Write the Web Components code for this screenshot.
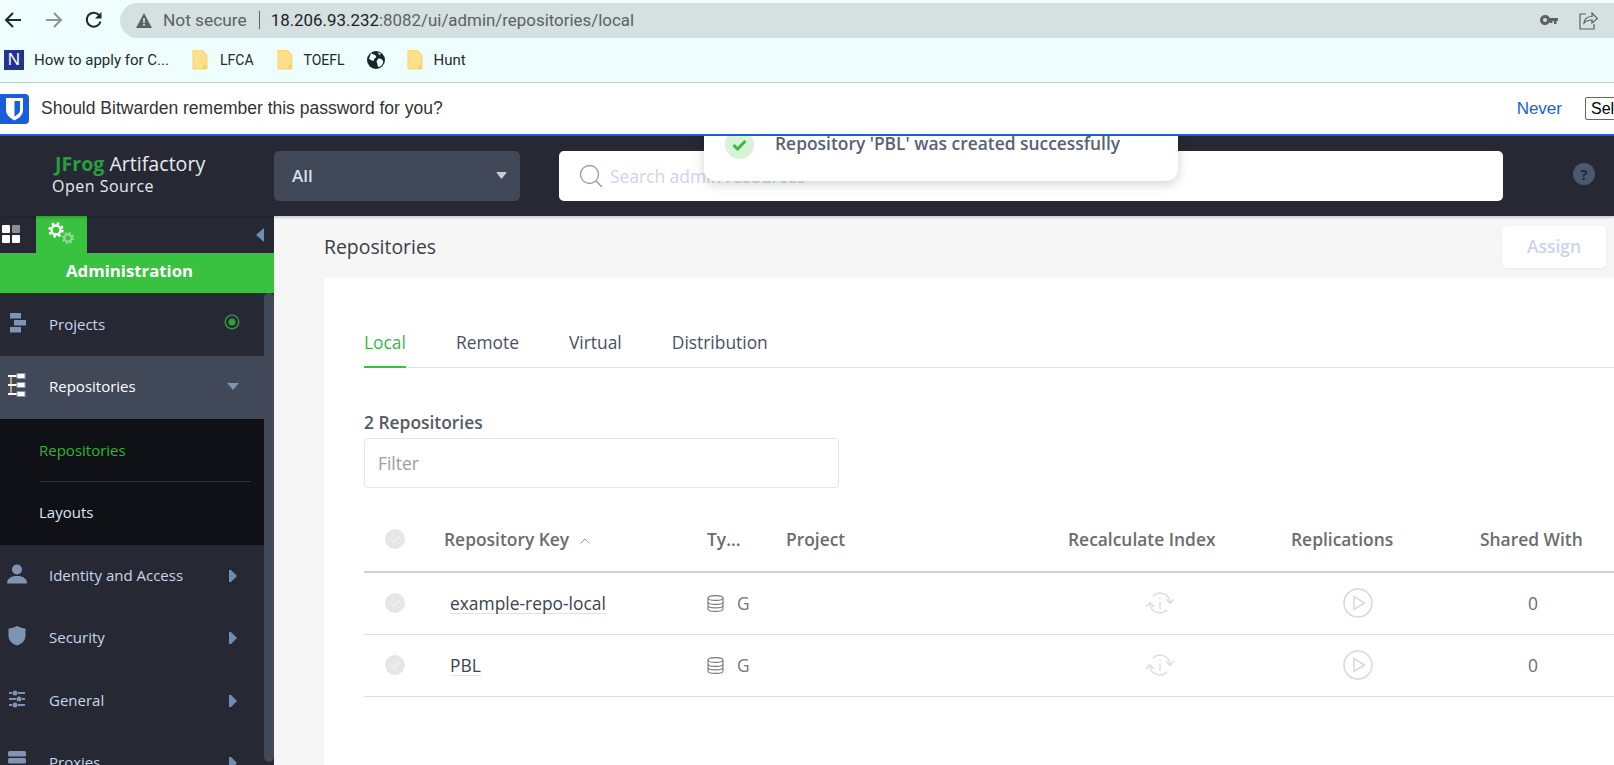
<!DOCTYPE html>
<html>
<head>
<meta charset="utf-8">
<title>Repositories</title>
<style>
    html, body { margin: 0; height: 765px; overflow: hidden; background: #fff; }
    body { display: flex; flex-direction: column; font-family: "Open Sans", sans-serif; }
</style>
</head>
<body>
<browser-toolbar url-host="18.206.93.232" url-path=":8082/ui/admin/repositories/local"></browser-toolbar>
<bookmark-bar></bookmark-bar>
<bitwarden-bar></bitwarden-bar>
<artifactory-app>
    <success-toast text="Repository 'PBL' was created successfully"></success-toast>
    <app-header></app-header>
    <div style="display:flex;flex:1;min-height:0">
        <side-nav>
            <nav-item label="Projects" arrow="dot" style="height:63px">
                <svg slot="icon" width="20" height="20" viewBox="0 0 20 20" fill="#7f93b2"><rect x="3" y="0" width="11" height="5.5"/><rect x="7" y="7" width="12" height="5.5"/><rect x="3" y="14" width="11" height="5.5"/></svg>
            </nav-item>
            <nav-item label="Repositories" arrow="down" open>
                <svg slot="icon" width="20" height="24" viewBox="0 0 20 24" fill="none"><path d="M4 3v18" stroke="#eebb80" stroke-width="1.500"/><path d="M1 3h9M1 12h9M1 21h9" stroke="#fff" stroke-width="2"/><rect x="10" y="0.5" width="8" height="5" fill="#fff" stroke="#8a94a8"/><rect x="10" y="9.5" width="8" height="5" fill="#fff" stroke="#8a94a8"/><rect x="10" y="18.5" width="8" height="5" fill="#fff" stroke="#8a94a8"/></svg>
            </nav-item>
            <sub-menu>
                <sub-item label="Repositories" active></sub-item>
                <sub-item label="Layouts"></sub-item>
            </sub-menu>
            <nav-item label="Identity and Access" arrow="right">
                <svg slot="icon" width="20" height="20" viewBox="0 0 20 20" fill="#7f93b2"><circle cx="10" cy="5.5" r="5"/><path d="M0 19.500c0-5 4-7.500 10-7.500s10 2.500 10 7.500z"/></svg>
            </nav-item>
            <nav-item label="Security" arrow="right">
                <svg slot="icon" width="20" height="20" viewBox="0 0 20 20" fill="#7f93b2"><path d="M10 0c3 1.800 5.500 2.300 8.500 2.500v7c0 5-3.500 8.500-8.500 10-5-1.500-8.500-5-8.500-10v-7C4.500 2.300 7 1.800 10 0z"/></svg>
            </nav-item>
            <nav-item label="General" arrow="right">
                <svg slot="icon" width="20" height="18" viewBox="0 0 20 18" fill="#7f93b2"><rect x="2" y="2" width="3" height="2"/><circle cx="8" cy="3" r="2.500"/><rect x="11" y="2" width="7" height="2"/><rect x="2" y="8" width="7" height="2"/><circle cx="12" cy="9" r="2.500"/><rect x="15" y="8" width="3" height="2"/><rect x="2" y="14" width="3" height="2"/><circle cx="8" cy="15" r="2.500"/><rect x="11" y="14" width="7" height="2"/></svg>
            </nav-item>
            <nav-item label="Proxies" arrow="right">
                <svg slot="icon" width="20" height="20" viewBox="0 0 20 20" fill="#7f93b2"><rect x="1" y="0" width="18" height="5.500" rx="1.500"/><rect x="1" y="7" width="18" height="5.500" rx="1.500"/><rect x="1" y="14" width="18" height="5.500" rx="1.500"/></svg>
            </nav-item>
        </side-nav>
        <repo-page>
            <repo-tabs></repo-tabs>
            <repo-filter count="2 Repositories"></repo-filter>
            <repo-table>
                <repo-row name="example-repo-local"></repo-row>
                <repo-row name="PBL"></repo-row>
            </repo-table>
        </repo-page>
    </div>
</artifactory-app>

<script>
class BrowserToolbar extends HTMLElement {
    connectedCallback() {
        if (this.shadowRoot) return;
        this.attachShadow({ mode: "open" });
        this.shadowRoot.innerHTML = `
            <style>
                :host{ display: flex; align-items: center; height: 39px; background: #eefefe; box-sizing: border-box; flex: none; }
                svg{ display: block; flex: none; }
                #nav{ display: flex; align-items: center; width: 120px; flex: none; }
                #nav svg:nth-child(1){ margin-left: 4px; }
                #nav svg:nth-child(2){ margin-left: 23px; }
                #nav svg:nth-child(3){ margin-left: 22px; }
                #omnibox{
                    flex: 1; height: 35px; margin-top: 1px; display: flex; align-items: center;
                    background: #d4e1e0; border-radius: 18px 0 0 18px;
                    font: 16.900px Roboto, sans-serif; color: #5d6163;
                }
                #warn{ margin-left: 16px; }
                #secure{ margin-left: 11px; font-size: 17.300px; }
                #sep{ width: 1px; height: 18px; background: #5d6163; margin: 0 11px 0 12px; }
                #host{ color: #1f2223; }
                #right{ margin-left: auto; display: flex; align-items: center; }
            </style>
            <div id="nav">
                <svg width="18" height="18" viewBox="0 0 18 18" fill="none" stroke="#20282a" stroke-width="2"><path d="M17 9H2M9 2 2 9l7 7"/></svg>
                <svg width="18" height="18" viewBox="0 0 18 18" fill="none" stroke="#8a9494" stroke-width="2"><path d="M1 9h15M9 2l7 7-7 7"/></svg>
                <svg width="18" height="18" viewBox="0 0 18 18" fill="none" stroke="#20282a" stroke-width="2"><path d="M15.500 10.500A7 7 0 1 1 14 4"/><path d="M16.500 1v6.500H10z" fill="#20282a" stroke="none"/></svg>
            </div>
            <div id="omnibox">
                <svg id="warn" width="16" height="15" viewBox="0 0 16 15"><path d="M8 0 16 15H0z" fill="#5d6163"/><rect x="7.200" y="5" width="1.600" height="5" fill="#d4e1e0"/><rect x="7.200" y="11" width="1.600" height="1.800" fill="#d4e1e0"/></svg>
                <span id="secure">Not secure</span>
                <span id="sep"></span>
                <span><span id="host">${this.getAttribute("url-host")}</span>${this.getAttribute("url-path")}</span>
                <div id="right">
                    <svg width="18" height="10" viewBox="0 0 18 10" fill="#5d6163"><path d="M5 0a5 5 0 1 1-4.800 6.300A5 5 0 0 1 5 0zm0 3a2 2 0 1 0 0 4 2 2 0 0 0 0-4z"/><path d="M9 3h9v3h-1.500v3h-2.500V6h-1.500v2h-2.500V6H9z"/></svg>
                    <svg style="margin:0 16px 0 21px" width="19" height="19" viewBox="0 0 19 19" fill="none" stroke="#5d6163" stroke-width="1.200"><path d="M7 3H1v15h14v-5"/><path d="M5 12c.5-4 3-6.500 8-6.500V2l5.500 5.500L13 12V9c-4 0-6 1-8 3z"/></svg>
                </div>
            </div>
        `;
    }
}

class BookmarkBar extends HTMLElement {
    connectedCallback() {
        if (this.shadowRoot) return;
        this.attachShadow({ mode: "open" });
        const folder = `<svg width="16" height="20" viewBox="0 0 16 20"><path d="M1 0h9l5 5v14H1z" fill="#ffe08a" stroke="#f5d36c"/><path d="M11 15h4v4h-4z" fill="#f5d36c"/></svg>`;
        this.shadowRoot.innerHTML = `
            <style>
                :host{
                    display: flex; align-items: center; height: 44px; flex: none; box-sizing: border-box;
                    background: #eefefe; border-bottom: 1px solid #b9cdca; padding-bottom: 2px;
                    font: 14px Roboto, sans-serif; color: #23282a;
                }
                svg{ display: block; flex: none; }
                span{ white-space: nowrap; }
                #n{
                    width: 20px; height: 20px; margin-left: 4px; background: #22348c; color: #fff;
                    font: 400 17px/20px "Liberation Sans", sans-serif; text-align: center;
                }
            </style>
            <div id="n">N</div>
            <span style="margin-left:10px;width:136px;font-size:15px">How to apply for C...</span>
            <span style="margin-left:22px;display:block">${folder}</span>
            <span style="margin-left:12px">LFCA</span>
            <span style="margin-left:23px;display:block">${folder}</span>
            <span style="margin-left:11px">TOEFL</span>
            <svg style="margin-left:22px" width="18" height="18" viewBox="0 0 18 18"><circle cx="9" cy="9" r="9" fill="#12282a"/><path d="M4 2c2 2 4 1 5 3s-2 2-2 4-3 0-5-1zM11 8c2-1 4 0 5 2s-2 6-4 6-1-3-2-4 0-3 1-4zM11 1l3 2-2 1z" fill="#eefefe"/></svg>
            <span style="margin-left:22px;display:block">${folder}</span>
            <span style="margin-left:11px;font-size:15px">Hunt</span>
        `;
    }
}

class BitwardenBar extends HTMLElement {
    connectedCallback() {
        if (this.shadowRoot) return;
        this.attachShadow({ mode: "open" });
        this.shadowRoot.innerHTML = `
            <style>
                :host{
                    display: flex; align-items: center; height: 53px; flex: none; box-sizing: border-box;
                    background: #fff; border-bottom: 2px solid #175ddc; overflow: hidden;
                    font: 17.500px "Liberation Sans", Arial, sans-serif; color: #333;
                    position: relative; z-index: 2;
                }
                svg{ display: block; flex: none; }
                #never{ margin-left: auto; color: #175ddc; font-size: 17px; }
                #save{
                    margin-left: 23px; margin-right: -30px; width: 59px; height: 23px; box-sizing: border-box;
                    border: 1px solid #666; border-radius: 2px; color: #000; padding-left: 5px; font-size: 16px; line-height: 21px; white-space: nowrap;
                }
            </style>
            <svg width="29" height="30" viewBox="0 0 29 30"><rect x="-5" y="0" width="34" height="30" rx="4" fill="#175ddc"/><path d="M6 4h17v12c0 5-4 8-8.500 10.500C10 24 6 21 6 16z" fill="#fff"/><path d="M14.500 7H20v9c0 3-3 5-5.500 6.500z" fill="#175ddc"/></svg>
            <span style="margin-left:12px">Should Bitwarden remember this password for you?</span>
            <span id="never">Never</span>
            <div id="save">Select</div>
        `;
    }
}

class ArtifactoryApp extends HTMLElement {
    constructor() {
        super();
        this.attachShadow({ mode: "open" });
        this.shadowRoot.innerHTML = `
            <style>
                :host{ display: flex; flex-direction: column; flex: 1; min-height: 0; position: relative; overflow: hidden; background: #f6f6f6; }
            </style>
            <slot></slot>
        `;
    }
}

class SuccessToast extends HTMLElement {
    connectedCallback() {
        if (this.shadowRoot) return;
        this.attachShadow({ mode: "open" });
        this.shadowRoot.innerHTML = `
            <style>
                :host{
                    position: absolute; left: 704px; top: -20px; width: 474px; height: 65px; z-index: 3;
                    display: flex; align-items: flex-start; box-sizing: border-box;
                    background: #fff; border-radius: 0 0 12px 12px; box-shadow: 0 3px 12px rgba(0,0,0,.18);
                    font: 600 17.400px "Open Sans", sans-serif; color: #5b6272;
                }
                #check{
                    width: 29px; height: 29px; border-radius: 50%; background: #d8f3d8; flex: none;
                    margin: 14px 0 0 21px; display: flex; align-items: center; justify-content: center;
                }
                span{ margin: 15px 0 0 21px; line-height: 24px; white-space: nowrap; }
            </style>
            <div id="check"><svg width="15" height="12" viewBox="0 0 15 12" fill="none" stroke="#33bb3c" stroke-width="3"><path d="M1.500 6 5.500 10 13.500 2"/></svg></div>
            <span>${this.getAttribute("text")}</span>
        `;
    }
}

class AppHeader extends HTMLElement {
    constructor() {
        super();
        this.attachShadow({ mode: "open" });
        this.shadowRoot.innerHTML = `
            <style>
                :host{
                    display: flex; align-items: center; height: 80px; flex: none; background: #262933;
                    box-shadow: 0 1px 3px rgba(0,0,0,.25); position: relative; z-index: 1;
                }
                #brand{ width: 274px; flex: none; box-sizing: border-box; padding: 0 0 8px 52px; color: #e6e9f0; }
                #brand div:first-child{ font-size: 19.600px; line-height: 27px; padding-left: 3px; white-space: nowrap; }
                #brand b{ color: #2a9d3f; font-weight: 700; }
                #brand div:last-child{ font-size: 16px; line-height: 18px; letter-spacing: .5px; }
                #scope{
                    width: 246px; height: 50px; flex: none; box-sizing: border-box; padding: 0 13px 2px 18px;
                    display: flex; align-items: center; justify-content: space-between;
                    background: #414857; border-radius: 5px; color: #d6dff0; font-size: 17px; font-weight: 600;
                }
                #search{
                    width: 944px; height: 50px; flex: none; margin-left: 39px; box-sizing: border-box; padding-left: 20px;
                    display: flex; align-items: center; gap: 7px;
                    background: #fff; border-radius: 5px; color: #ccd5ea; font-size: 17.400px;
                }
                #help{
                    width: 22px; height: 22px; margin: -4px 0 0 70px; border-radius: 50%; background: #4a5870; color: #262933;
                    font: 700 15px/22px "Open Sans", sans-serif; text-align: center;
                }
            </style>
            <div id="brand"><div><b>JFrog</b> Artifactory</div><div>Open Source</div></div>
            <div id="scope">All <svg width="11" height="7" viewBox="0 0 12 8"><path d="M1 0h10q1 0 .5 1L6.500 7.500q-.5.500-1 0L.5 1Q0 0 1 0z" fill="#c9ccd4"/></svg></div>
            <div id="search">
                <svg width="24" height="24" viewBox="0 0 24 24" fill="none" stroke="#8f98ad" stroke-width="1.300"><circle cx="10.500" cy="10.500" r="9"/><path d="M17 17l6 6"/></svg>
                <span>Search admin resources</span>
            </div>
            <div id="help">?</div>
        `;
    }
}

class SideNav extends HTMLElement {
    constructor() {
        super();
        this.attachShadow({ mode: "open" });
        this.shadowRoot.innerHTML = `
            <style>
                :host{ display: flex; flex-direction: column; width: 274px; flex: none; background: #262933; overflow: hidden; }
                svg{ display: block; }
                #tabs{ display: flex; align-items: center; height: 37px; flex: none; position: relative; }
                #grid{ display: grid; grid-template-columns: 8px 8px; gap: 2px; margin: -1px 0 0 2px; }
                #grid i{ height: 8px; background: #fff; border-radius: 1px; }
                #grid i:nth-child(2){ background: #8a8d92; }
                #gear{ width: 51px; height: 37px; margin-left: 16px; background: #39c140; display: flex; }
                #gear svg{ margin: 6px 0 0 12px; }
                #collapse{ margin-left: auto; margin-right: 10px; }
                #title{
                    height: 40px; flex: none; box-sizing: border-box; padding-left: 66px; background: #39c140;
                    color: #fff; font: 700 16.800px/36px "Open Sans", sans-serif;
                }
                #body{ display: flex; flex: 1; min-height: 0; }
                #menu{ width: 264px; flex: none; }
                #track{ width: 10px; flex: none; background: #414857; border-radius: 5px; margin-bottom: 3px; }
            </style>
            <div id="tabs">
                <div id="grid"><i></i><i></i><i></i><i></i></div>
                <div id="gear">
                    <svg width="28" height="28" viewBox="0 0 28 28">
                        <g fill="none" stroke="#fff"><circle cx="8" cy="8" r="4.500" stroke-width="2.500"/><circle cx="8" cy="8" r="6.500" stroke-width="2.500" stroke-dasharray="2.500 2.600"/></g>
                        <g fill="none" stroke="#92de96"><circle cx="20" cy="16" r="3.500" stroke-width="2"/><circle cx="20" cy="16" r="5" stroke-width="2" stroke-dasharray="2 1.930"/></g>
                    </svg>
                </div>
                <svg id="collapse" width="8" height="14" viewBox="0 0 8 14"><path d="M8 0v14L0 7z" fill="#6f8cb3"/></svg>
            </div>
            <div id="title">Administration</div>
            <div id="body">
                <div id="menu"><slot></slot></div>
                <div id="track"></div>
            </div>
        `;
    }
}

class NavItem extends HTMLElement {
    connectedCallback() {
        if (this.shadowRoot) return;
        this.attachShadow({ mode: "open" });
        const arrow = this.getAttribute("arrow");
        let mark = `<svg width="8" height="12" viewBox="0 0 8 12"><path d="M0 0h2l6 6-6 6H0z" fill="#6f8cb3"/></svg>`;
        if (arrow == "down") {
            mark = `<svg width="12" height="8" viewBox="0 0 12 8" style="margin-left:-2px"><path d="M0 0h12L6 7z" fill="#7f93b2"/></svg>`;
        } else if (arrow == "dot") {
            mark = `<svg width="16" height="16" viewBox="0 0 16 16" style="margin:-5px 0 0 -5px"><circle cx="8" cy="8" r="6.800" fill="none" stroke="#2f9f3f" stroke-width="1.300"/><circle cx="8" cy="8" r="3.500" fill="#2f9f3f"/></svg>`;
        }
        const open = this.hasAttribute("open");
        this.shadowRoot.innerHTML = `
            <style>
                :host{
                    display: flex; align-items: center; height: 62.500px; box-sizing: border-box;
                    background: ${open ? "#414857" : "transparent"};
                    color: ${open ? "#fff" : "#c9d6ec"}; font-size: 15px;
                }
                #icon{ width: 49px; flex: none; box-sizing: border-box; padding: 0 0 4px 7px; }
                #label{ width: 180px; white-space: nowrap; padding-bottom: 2px; }
                svg{ display: block; }
                ::slotted(svg){ display: block; }
            </style>
            <div id="icon"><slot name="icon"></slot></div>
            <div id="label">${this.getAttribute("label")}</div>
            ${mark}
        `;
    }
}

class SubMenu extends HTMLElement {
    constructor() {
        super();
        this.attachShadow({ mode: "open" });
        this.shadowRoot.innerHTML = `
            <style>
                :host{ display: flex; flex-direction: column; height: 126px; box-sizing: border-box; background: #101116; padding-left: 39px; }
            </style>
            <slot></slot>
        `;
    }
}

class SubItem extends HTMLElement {
    connectedCallback() {
        if (this.shadowRoot) return;
        this.attachShadow({ mode: "open" });
        const active = this.hasAttribute("active");
        this.shadowRoot.innerHTML = `
            <style>
                :host{
                    display: flex; align-items: center; width: 212px; height: ${active ? 63 : 63}px; font-size: 15px;
                    color: ${active ? "#2fb52e" : "#dfe6f5"}; box-sizing: border-box;
                    ${active ? "border-bottom: 1px solid #2c2e35; padding-top: 1px;" : "padding-bottom: 3px;"}
                }
            </style>
            <span>${this.getAttribute("label")}</span>
        `;
    }
}

class RepoPage extends HTMLElement {
    constructor() {
        super();
        this.attachShadow({ mode: "open" });
        this.shadowRoot.innerHTML = `
            <style>
                :host{ display: flex; flex-direction: column; flex: 1; min-width: 0; padding-left: 50px; overflow: hidden; }
                #top{ display: flex; align-items: center; justify-content: space-between; height: 62px; flex: none; padding-right: 8px; }
                h1{ margin: -2px 0 0; font-size: 19.400px; font-weight: 400; color: #3a3d44; }
                #assign{
                    width: 104px; height: 42px; margin-top: -1px; background: #fff; border-radius: 5px; color: #cdd4e8;
                    font-size: 17.400px; font-weight: 600; line-height: 40px; text-align: center;
                    box-shadow: 0 1px 3px rgba(0,0,0,.06);
                }
                #card{ flex: 1; background: #fff; padding: 40px 0 0 40px; margin-right: -20px; border-radius: 3px 0 0 0; }
            </style>
            <div id="top"><h1>Repositories</h1><div id="assign">Assign</div></div>
            <div id="card"><slot></slot></div>
        `;
    }
}

class RepoTabs extends HTMLElement {
    constructor() {
        super();
        this.attachShadow({ mode: "open" });
        this.shadowRoot.innerHTML = `
            <style>
                :host{ display: flex; height: 50px; box-sizing: border-box; border-bottom: 1px solid #e2e2e2; font-size: 17.400px; color: #4a5160; gap: 50px; }
                div{ height: 50px; box-sizing: border-box; padding-top: 12px; line-height: 24px; }
                .on{ color: #3cb54a; border-bottom: 2px solid #39c140; }
            </style>
            <div class="on">Local</div><div>Remote</div><div>Virtual</div><div>Distribution</div>
        `;
    }
}

class RepoFilter extends HTMLElement {
    connectedCallback() {
        if (this.shadowRoot) return;
        this.attachShadow({ mode: "open" });
        this.shadowRoot.innerHTML = `
            <style>
                :host{ display: block; padding-top: 43px; }
                #count{ font-size: 17.400px; font-weight: 600; line-height: 22px; color: #555a66; }
                #input{
                    width: 475px; height: 50px; margin-top: 5px; box-sizing: border-box; padding-left: 13px;
                    border: 1px solid #e3e5ea; border-radius: 4px; font-size: 17.400px; line-height: 48px; color: #9a9da3;
                }
            </style>
            <div id="count">${this.getAttribute("count")}</div>
            <div id="input">Filter</div>
        `;
    }
}

// shared column widths for the header and the rows
const REPO_COLUMNS = "grid-template-columns: 80px 263px 79px 282px 223px 189px 1fr;";
const ROUND_CHECK = `<svg width="20" height="20" viewBox="0 0 20 20" style="display:block;margin-left:21px"><circle cx="10" cy="10" r="10" fill="#e6e6e6"/><path d="M6 10.500l3 3 5.500-6.500" fill="none" stroke="#f2f2f2" stroke-width="1.200"/></svg>`;

class RepoTable extends HTMLElement {
    constructor() {
        super();
        this.attachShadow({ mode: "open" });
        this.shadowRoot.innerHTML = `
            <style>
                :host{ display: block; margin-top: 21px; }
                #head{
                    display: grid; ${REPO_COLUMNS} align-items: center; height: 64px; box-sizing: border-box;
                    border-bottom: 2px solid #d0d0d0; font-size: 17.400px; font-weight: 600; color: #6c6c70; padding-bottom: 3px;
                }
                span{ white-space: nowrap; }
            </style>
            <div id="head">
                ${ROUND_CHECK}
                <span>Repository Key <svg width="12" height="6" viewBox="0 0 12 6" style="margin-left:5px;vertical-align:middle" fill="none" stroke="#999" stroke-width="1"><path d="M1.500 5.500 6 1l4.500 4.500"/></svg></span>
                <span>Ty...</span>
                <span>Project</span>
                <span>Recalculate Index</span>
                <span>Replications</span>
                <span>Shared With</span>
            </div>
            <slot></slot>
        `;
    }
}

class RepoRow extends HTMLElement {
    connectedCallback() {
        if (this.shadowRoot) return;
        this.attachShadow({ mode: "open" });
        this.shadowRoot.innerHTML = `
            <style>
                :host{
                    display: grid; ${REPO_COLUMNS} align-items: center; height: 62px; box-sizing: border-box;
                    border-bottom: 1px solid #e0e0e0; font-size: 17.400px; color: #555; padding-bottom: 1px;
                }
                svg{ display: block; }
                #key{ margin-left: 6px; }
                #key span{ color: #3c4250; border-bottom: 1px solid #e2e2e2; line-height: 20px; display: inline-block; }
                #type{ display: flex; align-items: center; gap: 13px; color: #777; }
                #recalc{ padding-left: 77px; }
                #play{ padding-left: 52px; }
                #shared{ padding-left: 48px; color: #6c6c70; }
            </style>
            ${ROUND_CHECK}
            <div id="key"><span>${this.getAttribute("name")}</span></div>
            <div id="type">
                <svg width="17" height="17" viewBox="0 0 17 17" fill="none" stroke="#777" stroke-width="1.100"><ellipse cx="8.500" cy="3" rx="7.500" ry="2.400"/><path d="M1 3v11c0 1.300 3.400 2.400 7.500 2.400S16 15.300 16 14V3M1 7c0 1.300 3.400 2.400 7.500 2.400S16 8.300 16 7M1 10.500c0 1.300 3.400 2.400 7.500 2.400s7.500-1.100 7.500-2.400"/></svg>
                <span>G</span>
            </div>
            <div></div>
            <div id="recalc">
                <svg width="30" height="24" viewBox="0 0 30 24" fill="none" stroke="#dcdcdc" stroke-width="1.300"><path d="M8 5A10 10 0 0 1 25 11M22 19A10 10 0 0 1 5 13"/><path d="M21 8l4 4.500L29 8M1 16l4-4.500L9 16"/><path d="M15 10.500V18" stroke-width="1.300"/><path d="M15 6.500V8" stroke-width="1.500"/></svg>
            </div>
            <div id="play">
                <svg width="30" height="30" viewBox="0 0 30 30" fill="none" stroke="#d8d8d8" stroke-width="1.500"><circle cx="15" cy="15" r="14"/><path d="M11 8.500v13L21.500 15z"/></svg>
            </div>
            <div id="shared">0</div>
        `;
    }
}

customElements.define("browser-toolbar", BrowserToolbar);
customElements.define("bookmark-bar", BookmarkBar);
customElements.define("bitwarden-bar", BitwardenBar);
customElements.define("artifactory-app", ArtifactoryApp);
customElements.define("success-toast", SuccessToast);
customElements.define("app-header", AppHeader);
customElements.define("side-nav", SideNav);
customElements.define("nav-item", NavItem);
customElements.define("sub-menu", SubMenu);
customElements.define("sub-item", SubItem);
customElements.define("repo-page", RepoPage);
customElements.define("repo-tabs", RepoTabs);
customElements.define("repo-filter", RepoFilter);
customElements.define("repo-table", RepoTable);
customElements.define("repo-row", RepoRow);
</script>
</body>
</html>
